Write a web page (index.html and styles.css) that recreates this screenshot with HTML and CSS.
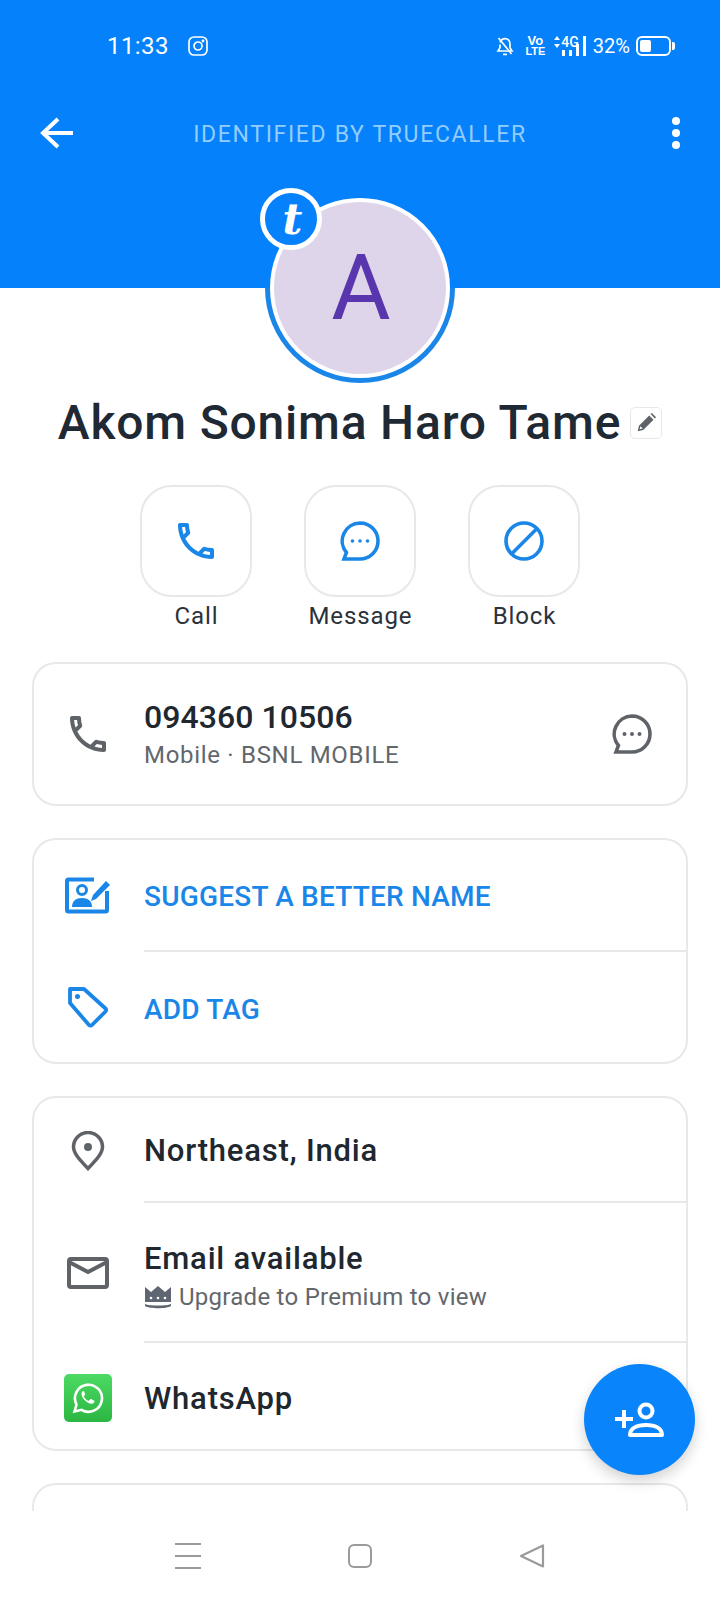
FILE: index.html
```html
<!DOCTYPE html>
<html>
  <head>
    <meta charset="utf-8"/>
    <link rel="stylesheet" href="styles.css">
  </head>
  <body>
    <div class="screen">
      <div class="scroll">
        <header class="header">
          <div class="status">
            <span class="time">11:33</span>
            <svg class="ig" viewBox="0 0 20 20" width="20" height="20" fill="none" stroke="#fff" stroke-width="1.7">
              <rect x="1" y="1" width="18" height="18" rx="5"/>
              <circle cx="10" cy="10" r="4"/>
              <circle cx="15" cy="5" r="0.6" fill="#fff"/>
            </svg>
            <span class="spacer"></span>
            <svg viewBox="0 0 18 20" width="18" height="20" fill="none" stroke="#fff" stroke-width="1.7">
              <path d="M4 6.500C5 4 7 2.600 9 2.600c3.400 0 5 2.700 5 5.600v3.600l2 3.200H2l2-3.200V8.500"/>
              <path d="M7 18.400h4"/>
              <path d="M2.500 2l13 16"/>
            </svg>
            <span class="volte"><b class="vo">Vo</b><b class="lte">LTE</b></span>
            <span class="net">
              <svg viewBox="0 0 6 12" width="6" height="12" fill="#fff"><path d="M3 0l3 4H0zM3 12L0 8h6z"/></svg>
              <span class="net-4g">4G</span>
            </span>
            <span class="bars">
              <i class="bar b1"></i><i class="bar b2"></i><i class="bar b3"></i><i class="bar b4"></i>
            </span>
            <span class="pct">32%</span>
            <span class="battery"><i class="level"></i></span>
          </div>
          <div class="toolbar">
            <svg viewBox="0 0 34 32" width="34" height="32" fill="none" stroke="#fff" stroke-width="4">
              <path d="M33 16H4"/>
              <path d="M18 2L3 16l15 14"/>
            </svg>
            <span class="toolbar-title">IDENTIFIED BY TRUECALLER</span>
            <span class="dots"><i></i><i></i><i></i></span>
          </div>
        </header>

        <section class="profile">
          <div class="avatar">
            <span class="avatar-inner">A</span>
            <span class="badge">t</span>
          </div>
          <div class="name-row">
            <h1 class="name">Akom Sonima Haro Tame</h1>
            <span class="edit">
              <svg viewBox="0 0 24 24" width="22" height="22" fill="#5f6368">
                <path d="M3 21l1.300-6L15.500 3.800l4.700 4.700L9 19.700zM5.800 15.500l-.6 3.300 3.300-.7z" fill-rule="evenodd"/>
                <path d="M17 2.300l1.300-1.300 4.700 4.700-1.300 1.300z"/>
              </svg>
            </span>
          </div>
          <div class="actions">
            <div class="action">
              <span class="action-box">
                <svg viewBox="0 0 24 24" width="48" height="48" fill="#1a86e8"><path d="M6.540 5c.06.89.21 1.760.45 2.590l-1.200 1.200c-.41-1.200-.67-2.470-.76-3.790h1.510m9.860 12.020c.85.24 1.720.39 2.600.45v1.490c-1.320-.09-2.590-.35-3.800-.75l1.200-1.190M7.500 3H4c-.55 0-1 .45-1 1 0 9.390 7.610 17 17 17 .55 0 1-.45 1-1v-3.490c0-.55-.45-1-1-1-1.240 0-2.450-.2-3.570-.57-.1-.04-.21-.05-.31-.05-.26 0-.51.1-.71.29l-2.200 2.200c-2.830-1.450-5.150-3.760-6.590-6.590l2.200-2.200c.28-.28.36-.67.25-1.020C8.700 6.450 8.500 5.250 8.500 4c0-.55-.45-1-1-1z"/></svg>
              </span>
              <span class="action-label">Call</span>
            </div>
            <div class="action">
              <span class="action-box">
                <svg viewBox="0 0 40 40" width="40" height="40" fill="none" stroke="#1a86e8" stroke-width="3.600">
                  <path d="M20 2a18 18 0 0 1 0 36H4l2.400-6.500A18 18 0 0 1 20 2z"/>
                  <g fill="#1a86e8" stroke="none"><circle cx="12.500" cy="20" r="1.800"/><circle cx="20" cy="20" r="1.800"/><circle cx="27.500" cy="20" r="1.800"/></g>
                </svg>
              </span>
              <span class="action-label">Message</span>
            </div>
            <div class="action">
              <span class="action-box">
                <svg viewBox="0 0 40 40" width="40" height="40" fill="none" stroke="#1a86e8" stroke-width="3.600">
                  <circle cx="20" cy="20" r="18"/>
                  <path d="M7.500 33L33 7.500"/>
                </svg>
              </span>
              <span class="action-label">Block</span>
            </div>
          </div>
        </section>

        <main class="cards">
          <div class="card">
            <div class="row row-phone">
              <span class="row-icon">
                <svg viewBox="0 0 24 24" width="48" height="48" fill="#5f6368"><path d="M6.540 5c.06.89.21 1.760.45 2.590l-1.200 1.200c-.41-1.200-.67-2.470-.76-3.790h1.510m9.860 12.020c.85.24 1.720.39 2.600.45v1.490c-1.320-.09-2.590-.35-3.800-.75l1.200-1.190M7.500 3H4c-.55 0-1 .45-1 1 0 9.390 7.610 17 17 17 .55 0 1-.45 1-1v-3.490c0-.55-.45-1-1-1-1.240 0-2.450-.2-3.570-.57-.1-.04-.21-.05-.31-.05-.26 0-.51.1-.71.29l-2.200 2.200c-2.830-1.450-5.150-3.760-6.590-6.590l2.200-2.200c.28-.28.36-.67.25-1.020C8.700 6.450 8.500 5.250 8.500 4c0-.55-.45-1-1-1z"/></svg>
              </span>
              <div class="row-text phone-text">
                <div class="number">094360 10506</div>
                <div class="sub">Mobile · BSNL MOBILE</div>
              </div>
              <svg class="row-end" viewBox="0 0 40 40" width="40" height="40" fill="none" stroke="#5f6368" stroke-width="3.600">
                <path d="M20 2a18 18 0 0 1 0 36H4l2.400-6.500A18 18 0 0 1 20 2z"/>
                <g fill="#5f6368" stroke="none"><circle cx="12.500" cy="20" r="2"/><circle cx="20" cy="20" r="2"/><circle cx="27.500" cy="20" r="2"/></g>
              </svg>
            </div>
          </div>

          <div class="card">
            <div class="row row-suggest">
              <span class="row-icon">
                <svg viewBox="0 0 46 38" width="46" height="38">
                  <path d="M29 3.500H3.500a1.500 1.500 0 0 0-1.500 1.500v29a1.500 1.500 0 0 0 1.500 1.500h37a1.500 1.500 0 0 0 1.500-1.500V15" fill="none" stroke="#1a86e8" stroke-width="4"/>
                  <circle cx="17" cy="14" r="4.500" fill="none" stroke="#1a86e8" stroke-width="3"/>
                  <path d="M7 31c0-6 4-9 10-9s10 3 10 9z" fill="#1a86e8"/>
                  <path d="M26 25l2-6L41 5l4 4-14 14z" fill="#1a86e8"/>
                </svg>
              </span>
              <span class="link">SUGGEST A BETTER NAME</span>
            </div>
            <div class="divider"></div>
            <div class="row row-tag">
              <span class="row-icon">
                <svg viewBox="0 0 42 42" width="42" height="42" fill="none" stroke="#1a86e8" stroke-width="3.800" stroke-linejoin="round">
                  <path d="M3 3h14l21.500 19.500a2 2 0 0 1 0 3L25 39a2 2 0 0 1-3 0L3 17z"/>
                  <circle cx="10.500" cy="10.500" r="2.500" fill="#1a86e8" stroke="none"/>
                </svg>
              </span>
              <span class="link">ADD TAG</span>
            </div>
          </div>

          <div class="card">
            <div class="row row-place">
              <span class="row-icon">
                <svg viewBox="0 0 34 40" width="34" height="40" fill="none" stroke="#5f6368" stroke-width="3.500">
                  <path d="M17 37.500C8 28 2.500 22 2.500 16a14.500 14.500 0 0 1 29 0c0 6-5.500 12-14.500 21.500z"/>
                  <circle cx="17" cy="16" r="4" fill="#5f6368" stroke="none"/>
                </svg>
              </span>
              <span class="title">Northeast, India</span>
            </div>
            <div class="divider"></div>
            <div class="row row-mail">
              <span class="row-icon">
                <svg viewBox="0 0 42 32" width="42" height="32" fill="none" stroke="#5f6368" stroke-width="4">
                  <rect x="2" y="2" width="38" height="28" rx="2"/>
                  <path d="M3 5.500L21 15 39 5.500"/>
                </svg>
              </span>
              <div class="row-text mail-text">
                <div class="title">Email available</div>
                <div class="sub premium">
                  <svg viewBox="0 0 28 24" width="28" height="24" fill="#5f6672">
                    <path d="M1 2l6 5 7-6 7 6 6-5v15H1z"/>
                    <path d="M1 19c4 2 22 2 26 0v2c-4 3-22 3-26 0z"/>
                    <g fill="#fff"><circle cx="7" cy="13" r="1.300"/><circle cx="14" cy="13" r="1.300"/><circle cx="21" cy="13" r="1.300"/></g>
                  </svg>
                  Upgrade to Premium to view
                </div>
              </div>
            </div>
            <div class="divider"></div>
            <div class="row row-whatsapp">
              <span class="row-icon">
                <span class="wa">
                  <svg viewBox="0 0 32 32" width="32" height="32">
                    <path d="M2.500 29.500l2-7A13.500 13.500 0 1 1 9.500 27.800z" fill="none" stroke="#fff" stroke-width="2.600"/>
                    <path d="M11.500 9c-.8 0-2 1.200-2 3 0 2 1.500 4.500 3.500 6.500s4.500 3.200 6.500 3.200c1.800 0 3-1.300 3-2.300 0-.5-.2-.7-.6-.9l-2.800-1.400c-.4-.2-.7-.1-1 .3l-1 1.200c-.2.300-.5.300-.9.100-2-.9-3.300-2.200-4.200-4-.2-.4-.1-.6.200-.9l.8-1c.2-.3.2-.6.1-.9l-1.100-2.500c-.1-.3-.4-.4-1-.4z" fill="#fff"/>
                  </svg>
                </span>
              </span>
              <span class="title">WhatsApp</span>
            </div>
          </div>

          <div class="card card-cut"></div>
        </main>
      </div>

      <nav class="nav">
        <span class="nav-menu"><i></i><i></i><i></i></span>
        <span class="nav-home"></span>
        <svg viewBox="0 0 26 26" width="26" height="26" fill="none" stroke="#9a9a9a" stroke-width="2.200" stroke-linejoin="round">
          <path d="M24 2.500v21L2 13z"/>
        </svg>
      </nav>

      <button class="fab">
        <svg viewBox="0 0 50 36" width="50" height="36" fill="none" stroke="#fff" stroke-width="4">
          <circle cx="31" cy="9" r="6.500"/>
          <path d="M15 33c0-7 7-10 16-10s16 3 16 10z" stroke-linejoin="round"/>
          <path d="M0 17h18M9 8v18"/>
        </svg>
      </button>
    </div>
  </body>
</html>
```

FILE: styles.css
```css
* {
  box-sizing: border-box;
}
html, body {
  margin: 0;
  padding: 0;
  background: #fff;
}
body {
  font-family: Roboto, "Liberation Sans", sans-serif;
  color: #20272f;
}
.screen {
  position: relative;
  width: 720px;
  height: 1600px;
  overflow: hidden;
  background: #fff;
}
.scroll {
  height: 1511px;
  overflow: hidden;
}

/* blue top */
.header {
  height: 288px;
  background: #0481fb;
  color: #fff;
}
.status {
  height: 92px;
  padding: 0 49px 0 107px;
  display: flex;
  align-items: center;
}
.time {
  font-size: 24px;
  letter-spacing: 0.4px;
}
.ig {
  margin-left: 19px;
}
.spacer {
  flex: 1;
}
.volte {
  margin-left: 11px;
  display: flex;
  flex-direction: column;
  align-items: center;
  font-family: "Liberation Sans", sans-serif;
  line-height: 10px;
}
.vo {
  font-size: 13px;
}
.lte {
  font-size: 11px;
}
.net {
  margin-left: 9px;
  display: flex;
  align-items: flex-start;
  gap: 1px;
  height: 20px;
}
.net-4g {
  font-size: 14px;
  line-height: 13px;
  font-weight: 500;
}
.bars {
  margin-left: -17px;
  display: flex;
  align-items: flex-end;
  gap: 4px;
  height: 20px;
}
.bar {
  display: block;
  width: 3px;
  background: #fff;
}
.b1 { height: 6px; }
.b2 { height: 6px; }
.b3 { height: 12px; }
.b4 { height: 20px; }
.pct {
  margin-left: 7px;
  font-size: 20px;
}
.battery {
  position: relative;
  margin-left: 6px;
  width: 35px;
  height: 20px;
  padding: 2px;
  border: 2px solid #fff;
  border-radius: 6px;
}
.battery::after {
  content: "";
  position: absolute;
  right: -6px;
  top: 4px;
  width: 3px;
  height: 8px;
  background: #fff;
  border-radius: 0 2px 2px 0;
}
.level {
  display: block;
  width: 11px;
  height: 100%;
  background: #fff;
  border-radius: 2px;
}
.toolbar {
  height: 80px;
  padding: 2px 40px 0;
  display: grid;
  grid-template-columns: 1fr auto 1fr;
  align-items: center;
}
.toolbar-title {
  padding-top: 3px;
  font-size: 23px;
  letter-spacing: 1.65px;
  color: #93cdfd;
}
.dots {
  justify-self: end;
  display: flex;
  flex-direction: column;
  gap: 4px;
}
.dots i {
  display: block;
  width: 8px;
  height: 8px;
  border-radius: 50%;
  background: #fff;
}

/* avatar, name, actions */
.profile {
  margin-top: -95px;
  display: flex;
  flex-direction: column;
  align-items: center;
}
.avatar {
  position: relative;
  width: 190px;
  height: 190px;
  padding: 5px;
  border-radius: 50%;
  background: linear-gradient(#0481fb 50%, #1a86e8 50%);
}
.avatar-inner {
  display: flex;
  align-items: center;
  justify-content: center;
  width: 100%;
  height: 100%;
  padding-left: 2px;
  border: 4px solid #fff;
  border-radius: 50%;
  background: #dfd5ea;
  color: #5a36ae;
  font-size: 91px;
}
.badge {
  position: absolute;
  left: -5px;
  top: -5px;
  width: 62px;
  height: 62px;
  padding-left: 3px;
  display: flex;
  align-items: center;
  justify-content: center;
  border: 5px solid #fff;
  border-radius: 50%;
  background: #0481fb;
  color: #fff;
  font-family: "DejaVu Serif", serif;
  font-style: italic;
  font-weight: 700;
  font-size: 43px;
  line-height: 1;
}
.name-row {
  margin-top: 12px;
  display: flex;
  align-items: center;
  gap: 9px;
}
.name {
  margin: 0;
  font-size: 48px;
  line-height: 56px;
  font-weight: 500;
  letter-spacing: 0.8px;
  color: #1f2933;
}
.edit {
  width: 32px;
  height: 32px;
  display: flex;
  align-items: center;
  justify-content: center;
  border: 1px solid #e8e8e8;
  border-radius: 5px;
}
.actions {
  margin-top: 34px;
  display: flex;
  gap: 52px;
}
.action {
  width: 112px;
  display: flex;
  flex-direction: column;
  align-items: center;
}
.action-box {
  width: 112px;
  height: 112px;
  display: flex;
  align-items: center;
  justify-content: center;
  border: 2px solid #e6e8ea;
  border-radius: 32px;
}
.action-label {
  margin-top: 4px;
  padding-left: 1px;
  font-size: 24px;
  line-height: 30px;
  letter-spacing: 0.9px;
  color: #2b323a;
  white-space: nowrap;
}

/* cards */
.cards {
  margin-top: 31px;
  padding: 0 32px;
  display: flex;
  flex-direction: column;
  gap: 32px;
}
.card {
  border: 2px solid #e6e8ea;
  border-radius: 24px;
  background: #fff;
}
.card-cut {
  height: 80px;
}
.row {
  display: grid;
  grid-template-columns: 107px 1fr auto;
  column-gap: 3px;
  align-items: center;
}
.row-icon {
  display: flex;
  align-items: center;
  justify-content: center;
}
.row-end {
  margin-right: 34px;
}
.row-phone { height: 140px; }
.row-suggest { height: 110px; }
.row-tag { height: 110px; }
.row-place { height: 103px; padding-top: 2px; }
.row-mail { height: 138px; padding-top: 2px; }
.row-whatsapp { height: 106px; padding-top: 4px; }
.row-suggest .link { padding-top: 2px; }
.row-tag .link { padding-top: 5px; }
.row-whatsapp .title { padding-top: 2px; }
.phone-text {
  padding-top: 2px;
}
.mail-text {
  padding-top: 5px;
}
.divider {
  height: 2px;
  margin-left: 110px;
  background: #e6e8ea;
}
.number {
  margin-top: -3px;
  font-size: 32px;
  line-height: 38px;
  font-weight: 500;
  letter-spacing: 0.05px;
}
.sub {
  margin-top: 4px;
  font-size: 24px;
  line-height: 30px;
  letter-spacing: 0.7px;
  color: #62676c;
}
.premium {
  margin-top: 4px;
  display: flex;
  align-items: center;
  gap: 7px;
  letter-spacing: 0.27px;
}
.link {
  font-size: 28px;
  font-weight: 500;
  letter-spacing: 0.2px;
  color: #1a86e8;
}
.title {
  font-size: 31px;
  line-height: 38px;
  font-weight: 500;
  letter-spacing: 0.8px;
}
.wa {
  width: 48px;
  height: 48px;
  display: flex;
  align-items: center;
  justify-content: center;
  border-radius: 5px;
  background: linear-gradient(#4cd964, #2bb741);
}

/* bottom bar */
.nav {
  height: 89px;
  display: flex;
  align-items: center;
  justify-content: center;
  gap: 147px;
  background: #fff;
}
.nav-menu {
  width: 26px;
  height: 26px;
  display: flex;
  flex-direction: column;
  justify-content: space-between;
}
.nav-menu i {
  display: block;
  height: 2px;
  background: #9a9a9a;
}
.nav-home {
  width: 24px;
  height: 24px;
  border: 2px solid #9a9a9a;
  border-radius: 6px;
}
.fab {
  position: absolute;
  left: 584px;
  top: 1364px;
  width: 111px;
  height: 111px;
  padding: 0;
  display: flex;
  align-items: center;
  justify-content: center;
  border: none;
  border-radius: 50%;
  background: #0a84fb;
  box-shadow: 0 6px 14px rgba(0, 0, 0, 0.18);
}
```
